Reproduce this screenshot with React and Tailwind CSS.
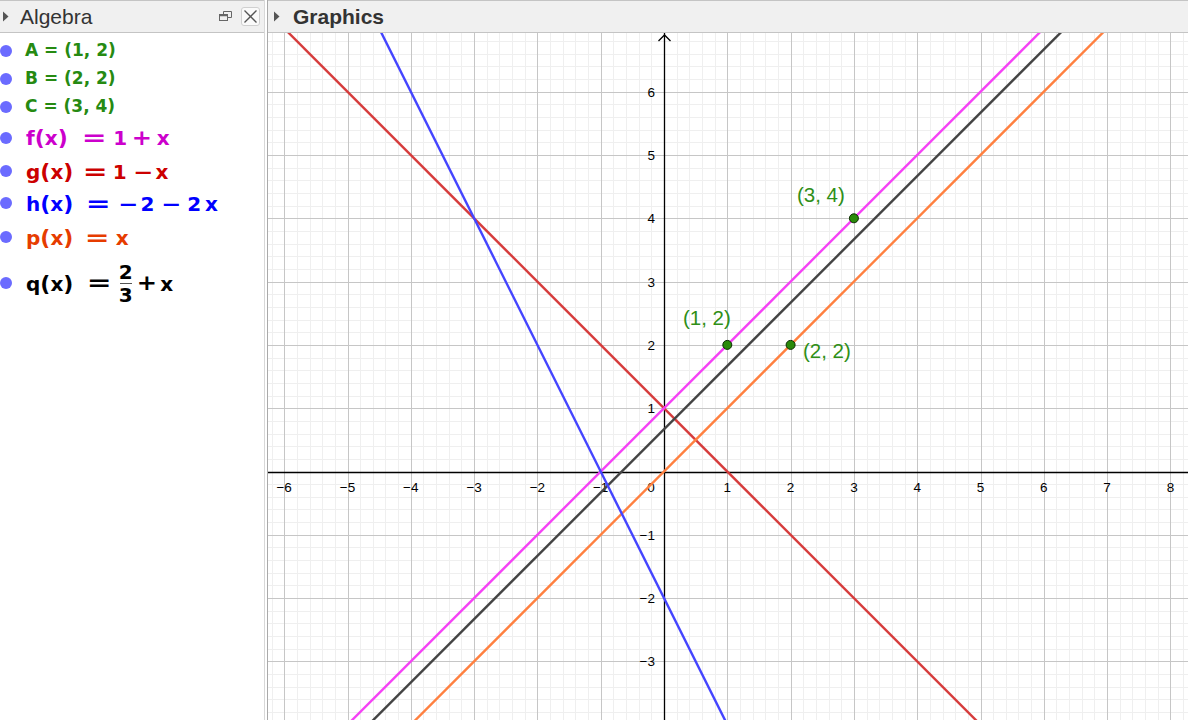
import React from "react";

const W = 920, H = 687, X0 = 396, Y0 = 438.5, S = 63.3;
const sx = (x) => X0 + x * S;
const sy = (y) => Y0 - y * S;
const crisp = (v) => Math.round(v) + 0.5;

function Grid() {
  const minorV = [], majorV = [], minorH = [], majorH = [];
  for (let k = -40; k <= 50; k++) {
    const x = k * 0.2;
    const px = sx(x);
    if (px < 0 || px > W) continue;
    (k % 5 === 0 ? majorV : minorV).push(crisp(px));
  }
  for (let k = -25; k <= 40; k++) {
    const y = k * 0.2;
    const py = sy(y);
    if (py < 0 || py > H) continue;
    (k % 5 === 0 ? majorH : minorH).push(crisp(py));
  }
  return (
    <g>
      {minorV.map((x, i) => <line key={"mv" + i} x1={x} y1={0} x2={x} y2={H} stroke="#efefef" strokeWidth="1" />)}
      {minorH.map((y, i) => <line key={"mh" + i} x1={0} y1={y} x2={W} y2={y} stroke="#efefef" strokeWidth="1" />)}
      {majorV.map((x, i) => <line key={"Mv" + i} x1={x} y1={0} x2={x} y2={H} stroke="#c6c6c6" strokeWidth="1" />)}
      {majorH.map((y, i) => <line key={"Mh" + i} x1={0} y1={y} x2={W} y2={y} stroke="#c6c6c6" strokeWidth="1" />)}
    </g>
  );
}

function FnLine({ m, b, color }) {
  const x1 = -8, x2 = 10;
  return <line x1={sx(x1)} y1={sy(m * x1 + b)} x2={sx(x2)} y2={sy(m * x2 + b)} stroke={color} strokeWidth="2.4" />;
}

function Canvas() {
  const ax = crisp(X0), ay = crisp(Y0);
  const xs = [-6, -5, -4, -3, -2, -1, 1, 2, 3, 4, 5, 6, 7, 8];
  const ys = [-3, -2, -1, 1, 2, 3, 4, 5, 6];
  const fmt = (n) => (n < 0 ? "\u2212" + Math.abs(n) : String(n));
  return (
    <svg width={W} height={H} className="block" style={{ fontFamily: '"Liberation Sans", Arial, sans-serif' }}>
      <rect x="0" y="0" width={W} height={H} fill="#ffffff" />
      <Grid />
      <line x1={0} y1={ay} x2={W} y2={ay} stroke="#000" strokeWidth="1.3" />
      <line x1={ax} y1={0} x2={ax} y2={H} stroke="#000" strokeWidth="1.3" />
      <polyline points={`${ax - 6},${8} ${ax},${2} ${ax + 6},${8}`} fill="none" stroke="#000" strokeWidth="1.3" />
      {xs.map((n) => (
        <text key={"x" + n} x={sx(n)} y={459} fontSize="13.5" textAnchor="middle" fill="#000">{fmt(n)}</text>
      ))}
      <text x={383} y={459} fontSize="13.5" textAnchor="middle" fill="#000">0</text>
      {ys.map((n) => (
        <text key={"y" + n} x={387} y={sy(n) + 5} fontSize="13.5" textAnchor="end" fill="#000">{fmt(n)}</text>
      ))}
      <FnLine m={-1} b={1} color="#d63c3c" />
      <FnLine m={1} b={0} color="#ff8040" />
      <FnLine m={1} b={2 / 3} color="#444444" />
      <FnLine m={1} b={1} color="#f542f5" />
      <FnLine m={-2} b={-2} color="#4545ff" />
      {[[1, 2], [2, 2], [3, 4]].map(([x, y]) => (
        <circle key={x + "-" + y} cx={sx(x)} cy={sy(y)} r="4.5" fill="#2a8a0a" stroke="#0a2a00" strokeWidth="1" />
      ))}
      <text x={415} y={292} fontSize="20.5" fill="#2f8f17">(1, 2)</text>
      <text x={535} y={325} fontSize="20.5" fill="#2f8f17">(2, 2)</text>
      <text x={529} y={169} fontSize="20.5" fill="#2f8f17">(3, 4)</text>
    </svg>
  );
}

function Tri() {
  return (
    <svg width="6" height="11" className="block">
      <polygon points="0,0.5 5.5,5.5 0,10.5" fill="#555" />
    </svg>
  );
}

function Bullet() {
  return <span className="block w-[12px] h-[12px] rounded-full bg-[#6b6bff] shrink-0" />;
}

const mathFont = { fontFamily: '"DejaVu Sans", "Liberation Sans", sans-serif' };

function Fx({ name }) {
  return (
    <span className="inline-flex items-baseline">
      <span>{name}</span>
      <span className="text-[22px]">(</span>
      <span>x</span>
      <span className="text-[22px]">)</span>
    </span>
  );
}

function Eq({ ml }) {
  return <span className={`inline-block scale-x-[1.35] text-[22px] ${ml}`}>=</span>;
}
function Plus({ ml }) {
  return <span className={`inline-block scale-x-[1.15] text-[21px] ${ml}`}>+</span>;
}
function Minus({ ml }) {
  return <span className={`inline-block scale-x-[1.2] ${ml}`}>{"\u2212"}</span>;
}

function Row({ h, children }) {
  return (
    <div className={`flex items-center ${h}`}>
      <Bullet />
      <div className="ml-[13px] flex items-center">{children}</div>
    </div>
  );
}

export default function App() {
  return (
    <div className="w-[1188px] h-[720px] flex bg-white overflow-hidden" style={{ fontFamily: '"Liberation Sans", Arial, sans-serif' }}>
      {/* Algebra */}
      <div className="w-[265px] shrink-0 flex flex-col border-r border-[#d8d8d8]">
        <div className="h-[33px] shrink-0 border-t border-b border-[#c4c4c4] bg-[#f0f0f0] flex items-center">
          <div className="ml-[3px]"><Tri /></div>
          <span className="ml-[11px] text-[21px] text-[#333] leading-none">Algebra</span>
          <div className="ml-auto flex items-center">
            <svg width="14" height="11" className="block mr-[8px]">
              <path d="M4.5 3 V0.5 H12.5 V6.5 H9" fill="none" stroke="#666" strokeWidth="1" />
              <rect x="0.5" y="3.5" width="8" height="6" fill="#f0f0f0" stroke="#666" strokeWidth="1" />
              <line x1="0.5" y1="4.5" x2="8.5" y2="4.5" stroke="#666" strokeWidth="1.5" />
            </svg>
            <div className="w-[19px] h-[19px] mr-[4px] rounded-[3px] border border-[#d0d0d0] bg-[#fafafa] flex items-center justify-center">
              <svg width="15" height="15" className="block">
                <line x1="1.5" y1="1.5" x2="13.5" y2="13.5" stroke="#555" strokeWidth="1.3" />
                <line x1="13.5" y1="1.5" x2="1.5" y2="13.5" stroke="#555" strokeWidth="1.3" />
              </svg>
            </div>
          </div>
        </div>
        <div className="flex flex-col pt-[4px] font-bold" style={mathFont}>
          <Row h="h-[28px]"><span className="text-[17px] text-[#268a12]">A = (1, 2)</span></Row>
          <Row h="h-[28px]"><span className="text-[17px] text-[#268a12]">B = (2, 2)</span></Row>
          <Row h="h-[28px]"><span className="text-[17px] text-[#268a12]">C = (3, 4)</span></Row>
          <Row h="h-[33px]">
            <span className="inline-flex items-baseline text-[20px] text-[#cc00cc] ml-[1px]">
              <Fx name="f" />
              <Eq ml="ml-[17px]" />
              <span className="ml-[10px]">1</span>
              <Plus ml="ml-[6px]" />
              <span className="ml-[6px]">x</span>
            </span>
          </Row>
          <Row h="h-[34px]">
            <span className="inline-flex items-baseline text-[20px] text-[#cc0000] ml-[1px]">
              <Fx name="g" />
              <Eq ml="ml-[13px]" />
              <span className="ml-[8px]">1</span>
              <Minus ml="ml-[8px]" />
              <span className="ml-[4px]">x</span>
            </span>
          </Row>
          <Row h="h-[30px]">
            <span className="inline-flex items-baseline text-[20px] text-[#0000ff] ml-[1px]">
              <Fx name="h" />
              <Eq ml="ml-[16px]" />
              <Minus ml="ml-[12px]" />
              <span className="ml-[4px]">2</span>
              <Minus ml="ml-[9px]" />
              <span className="ml-[7px]">2</span>
              <span className="ml-[4px]">x</span>
            </span>
          </Row>
          <Row h="h-[38px]">
            <span className="inline-flex items-baseline text-[20px] text-[#e63c00] ml-[1px]">
              <Fx name="p" />
              <Eq ml="ml-[15px]" />
              <span className="ml-[9px]">x</span>
            </span>
          </Row>
          <Row h="h-[54px]">
            <span className="inline-flex items-center text-[20px] text-black ml-[1px]">
              <Fx name="q" />
              <span className="ml-[17px] inline-block scale-x-[1.35] text-[22px] leading-none">=</span>
              <span className="ml-[10px] inline-flex flex-col items-center leading-none">
                <span className="leading-[18px]">2</span>
                <span className="block w-[12px] h-[1px] bg-[#555] my-[2px]" />
                <span className="leading-[18px]">3</span>
              </span>
              <span className="ml-[5px] inline-block scale-x-[1.15] text-[21px] leading-none">+</span>
              <span className="ml-[5px] leading-none mt-[2px]">x</span>
            </span>
          </Row>
        </div>
      </div>
      <div className="w-[2px] shrink-0" />
      {/* Graphics */}
      <div className="flex-1 flex flex-col border-l border-[#aaaaaa] min-w-0">
        <div className="h-[33px] shrink-0 border-t border-b border-[#c4c4c4] bg-[#f0f0f0] flex items-center">
          <div className="ml-[6px]"><Tri /></div>
          <span className="ml-[13px] text-[21px] font-bold text-[#333] leading-none">Graphics</span>
        </div>
        <div className="flex-1 overflow-hidden">
          <Canvas />
        </div>
      </div>
    </div>
  );
}
